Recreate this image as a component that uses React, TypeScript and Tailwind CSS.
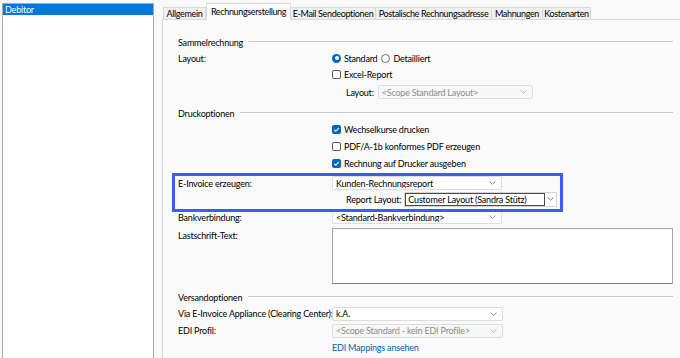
import React from "react";

function Chevron({ color = "#7a7a7a" }: { color?: string }) {
  return (
    <svg width="7" height="4" viewBox="0 0 7 4" className="shrink-0">
      <path d="M0.5 0.5 L3.5 3.3 L6.5 0.5" stroke={color} strokeWidth="0.9" fill="none" />
    </svg>
  );
}

function Check({ checked, label }: { checked?: boolean; label: string }) {
  return (
    <div className="flex items-center gap-[3px]">
      {checked ? (
        <div className="w-[9px] h-[9px] rounded-[2px] bg-[#0067c0] flex items-center justify-center">
          <svg width="7" height="7" viewBox="0 0 8 8">
            <path d="M1.3 4.2 L3.2 6 L6.7 2.2" stroke="white" strokeWidth="1.2" fill="none" />
          </svg>
        </div>
      ) : (
        <div className="w-[9px] h-[9px] rounded-[2px] border border-[#5a5a5a] bg-white" />
      )}
      <span>{label}</span>
    </div>
  );
}

function Radio({ checked, label }: { checked?: boolean; label: string }) {
  return (
    <div className="flex items-center gap-[3px]">
      {checked ? (
        <div className="w-[9px] h-[9px] rounded-full bg-[#0067c0] flex items-center justify-center">
          <div className="w-[4px] h-[4px] rounded-full bg-white" />
        </div>
      ) : (
        <div className="w-[9px] h-[9px] rounded-full border border-[#6a6a6a] bg-white" />
      )}
      <span>{label}</span>
    </div>
  );
}

function Select({ text, disabled, w }: { text: string; disabled?: boolean; w: string }) {
  return (
    <div
      className={`${w} h-[14px] flex items-center justify-between pl-[3px] pr-[5px] rounded-[2px] border border-[#dcdcdc] ${
        disabled ? "bg-[#f7f7f7] text-[#8c8c8c]" : "bg-white text-black"
      }`}
    >
      <span className="truncate">{text}</span>
      <Chevron color={disabled ? "#b5b5b5" : "#7a7a7a"} />
    </div>
  );
}

function Section({ title }: { title: string }) {
  return (
    <div className="flex items-center gap-[6px] h-[16px]">
      <span className="whitespace-nowrap">{title}</span>
      <div className="flex-1 border-t border-[#c8c8c8] border-b border-b-[#ffffff]" />
    </div>
  );
}

function Row({ label, children, h = "h-[17px]" }: { label?: string; children?: React.ReactNode; h?: string }) {
  return (
    <div className={`flex items-center ${h}`}>
      <div className="w-[154px] shrink-0 whitespace-nowrap">{label}</div>
      <div className="flex items-center">{children}</div>
    </div>
  );
}

export default function App() {
  const tabs = [
    { t: "Allgemein", w: "w-[43px]" },
    { t: "Rechnungserstellung", w: "w-[85px]", sel: true },
    { t: "E-Mail Sendeoptionen", w: "w-[86px]" },
    { t: "Postalische Rechnungsadresse", w: "w-[117px]" },
    { t: "Mahnungen", w: "w-[52px]" },
    { t: "Kostenarten", w: "w-[49px]" },
  ];
  return (
    <div className="w-[680px] h-[358px] overflow-hidden flex bg-[#f9f9f9] text-black font-['Lato',sans-serif] text-[9px] tracking-[-0.2px] leading-none">
      {/* left list */}
      <div className="ml-[2px] mt-[3px] w-[152px] h-[360px] shrink-0 border border-[#a9a9a9] bg-white">
        <div className="h-[11px] bg-[#0078d7] text-white flex items-center pl-[2px]">Debitor</div>
      </div>

      {/* right */}
      <div className="flex-1 flex flex-col pl-[8px] pt-[3px]">
        <div className="flex items-end h-[16px] pl-[1px] tracking-[-0.35px]">
          {tabs.map((tab) =>
            tab.sel ? (
              <div
                key={tab.t}
                className={`${tab.w} h-[17px] -mb-[1px] z-10 bg-[#fbfbfb] border border-b-0 border-[#d9d9d9] flex items-center justify-center pb-[1px] whitespace-nowrap`}
              >
                {tab.t}
              </div>
            ) : (
              <div
                key={tab.t}
                className={`${tab.w} h-[12px] bg-[#f0f0f0] border border-b-0 border-[#d9d9d9] -ml-[1px] first:ml-0 flex items-center justify-center whitespace-nowrap`}
              >
                {tab.t}
              </div>
            )
          )}
        </div>
        <div className="flex-1 border-l border-t border-[#d9d9d9] bg-[#fafafa] pl-[15px] pr-[7px] pt-[14px] flex flex-col">
          <Section title="Sammelrechnung" />
          <Row label="Layout:" h="h-[16px]">
            <div className="flex items-center gap-[4px]">
              <Radio checked label="Standard" />
              <Radio label="Detailliert" />
            </div>
          </Row>
          <Row h="h-[16px]">
            <Check label="Excel-Report" />
          </Row>
          <Row h="h-[16px] mt-[2px]">
            <div className="pl-[14px] flex items-center gap-[4px]">
              <span>Layout:</span>
              <Select text="<Scope Standard Layout>" disabled w="w-[155px]" />
            </div>
          </Row>
          <div className="mt-[5px]">
            <Section title="Druckoptionen" />
          </div>
          <Row>
            <Check checked label="Wechselkurse drucken" />
          </Row>
          <Row>
            <Check label="PDF/A-1b konformes PDF erzeugen" />
          </Row>
          <Row>
            <Check checked label="Rechnung auf Drucker ausgeben" />
          </Row>

          <div className="relative mt-[3px]">
            <Row label="E-Invoice erzeugen:" h="h-[16px]">
              <Select text="Kunden-Rechnungsreport" w="w-[170px]" />
            </Row>
            <Row h="h-[16px]">
              <div className="pl-[14px] flex items-center gap-[3px]">
                <span className="whitespace-nowrap">Report Layout:</span>
                <div className="w-[153px] h-[15px] flex items-center border border-[#d4d4d4] bg-white">
                  <div className="flex-1 h-full border border-[#4a4a4a] flex items-center pl-[2px] whitespace-nowrap">
                    Customer Layout (Sandra Stütz)
                  </div>
                  <div className="w-[11px] h-full flex items-center justify-center">
                    <Chevron />
                  </div>
                </div>
              </div>
            </Row>
            <div className="absolute -left-[6px] -top-[2px] w-[391px] h-[39px] border-[3px] border-[#3d5cf5]" />
          </div>

          <Row label="Bankverbindung:" h="h-[16px] mt-[2px]">
            <Select text="<Standard-Bankverbindung>" w="w-[170px]" />
          </Row>
          <div className="flex mt-[3px]">
            <div className="w-[154px] shrink-0 pt-[3px]">Lastschrift-Text:</div>
            <div className="flex-1 h-[56px] bg-white border border-[#a5a5a5] border-b-[#7a7a7a]" />
          </div>
          <div className="mt-[5px]">
            <Section title="Versandoptionen" />
          </div>
          <Row label="Via E-Invoice Appliance (Clearing Center):">
            <Select text="k.A." w="w-[171px]" />
          </Row>
          <Row label="EDI Profil:">
            <Select text="<Scope Standard - kein EDI Profile>" disabled w="w-[171px]" />
          </Row>
          <Row h="h-[16px]">
            <span className="text-[#0063b1]">EDI Mappings ansehen</span>
          </Row>
        </div>
      </div>
    </div>
  );
}
